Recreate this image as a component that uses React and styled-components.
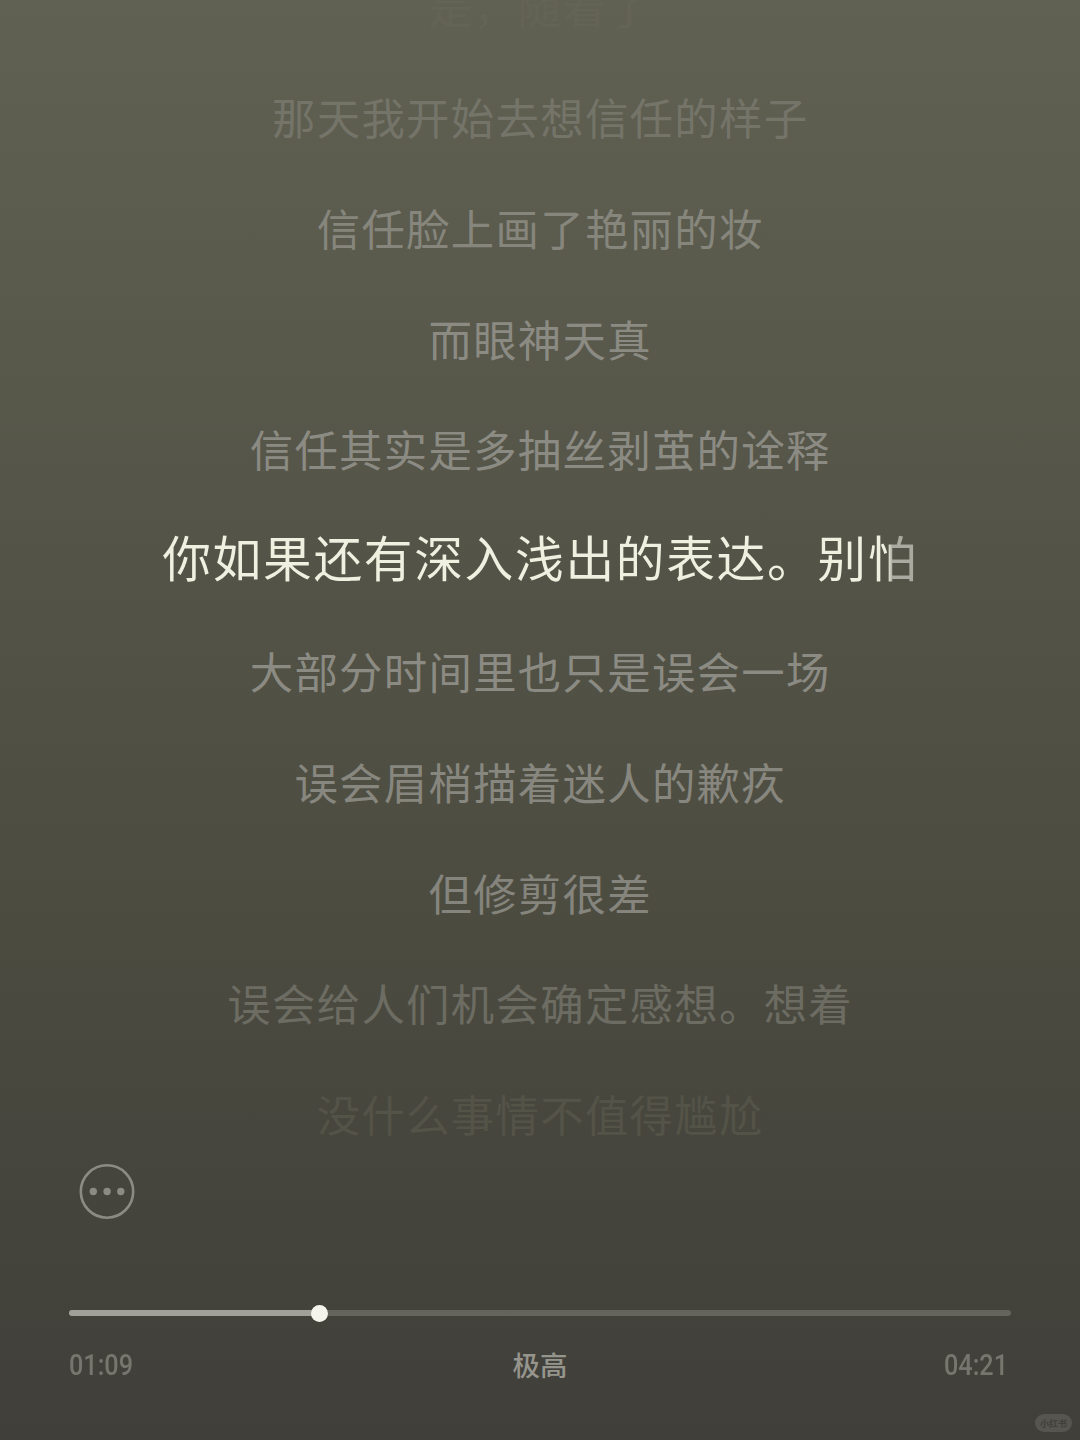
import styled, { createGlobalStyle } from 'styled-components'

const GlobalStyle = createGlobalStyle`
  * {
    box-sizing: border-box;
  }

  body {
    margin: 0;
    background: #42413b;
    font-family: 'Noto Sans CJK SC', sans-serif;
  }
`

const Player = styled.main`
  display: flex;
  flex-direction: column;
  width: 1080px;
  height: 1440px;
  overflow: hidden;
  background: linear-gradient(
    180deg,
    #616153 0%,
    #5c5c4f 12%,
    #535347 40%,
    #4b4b40 65%,
    #45453d 82%,
    #403f3a 100%
  );
`

const Lyrics = styled.section`
  display: flex;
  flex-direction: column;
  justify-content: flex-end;
  height: 1170px;
  padding-bottom: 1.4px;
  flex-shrink: 0;
  overflow: hidden;
`

const Line = styled.p`
  display: flex;
  align-items: center;
  justify-content: center;
  flex-shrink: 0;
  height: 110.8px;
  margin: 0;
  padding-left: 0.4px;
  font-size: 43.4px;
  letter-spacing: 1.3px;
  white-space: nowrap;
  color: ${(props) => props.$color || '#8b8b83'};
`

const ActiveLine = styled(Line)`
  padding-bottom: 7px;
  font-size: 48.8px;
  letter-spacing: 1.6px;
`

const Sung = styled.span`
  color: transparent;
  background: linear-gradient(90deg, #f0f0e1 96%, #aaaaa0 96.6%);
  background-clip: text;
`

const Controls = styled.footer`
  display: flex;
  flex-direction: column;
  padding: 0 69px;
`

const MoreButton = styled.button`
  width: 56px;
  height: 56px;
  margin: -7px 0 0 10px;
  padding: 0;
  border: none;
  background: none;
  color: #8b8b83;

  svg {
    display: block;
  }
`

const Track = styled.div`
  display: flex;
  align-items: center;
  height: 6px;
  margin-top: 91px;
  border-radius: 3px;
  background: #64635c;
`

const Played = styled.div`
  height: 6px;
  border-radius: 3px 0 0 3px;
  background: #a09f98;
`

const Thumb = styled.div`
  width: 17px;
  height: 17px;
  margin-left: -8px;
  border-radius: 50%;
  background: #f4f4ed;
`

const Info = styled.div`
  display: flex;
  align-items: center;
  justify-content: space-between;
  height: 40px;
  margin-top: 28px;
`

const Time = styled.span`
  width: 67px;
  padding-top: 1px;
  font-family: Roboto, sans-serif;
  font-size: 29px;
  font-weight: 500;
  color: #77766e;
  transform: scaleX(0.87);
  transform-origin: left center;
`

const Quality = styled.span`
  font-size: 27.5px;
  font-weight: 500;
  color: #96958d;
`

const Watermark = styled.div`
  display: flex;
  align-items: center;
  justify-content: center;
  align-self: flex-end;
  width: 37px;
  height: 18px;
  margin: 30px 8px 0 0;
  border-radius: 9px;
  font-size: 9px;
  font-weight: 700;
  color: #403f3a;
  background: #565550;
`

const before = [
  { text: '是，随着了', color: '#636356' },
  { text: '那天我开始去想信任的样子', color: '#747469' },
  { text: '信任脸上画了艳丽的妆', color: '#86867d' },
  { text: '而眼神天真' },
  { text: '信任其实是多抽丝剥茧的诠释' }
]

const after = [
  { text: '大部分时间里也只是误会一场' },
  { text: '误会眉梢描着迷人的歉疚', color: '#88877f' },
  { text: '但修剪很差', color: '#85847d' },
  { text: '误会给人们机会确定感想。想着', color: '#6c6c63' },
  { text: '没什么事情不值得尴尬', color: '#545348' }
]

const renderLine = ({ text, color }) => (
  <Line key={text} $color={color}>
    {text}
  </Line>
)

const App = () => {
  const elapsed = 69.2
  const duration = 261

  return (
    <>
      <GlobalStyle />
      <Player>
        <Lyrics>
          {before.map(renderLine)}
          <ActiveLine>
            <Sung>你如果还有深入浅出的表达。别怕</Sung>
          </ActiveLine>
          {after.map(renderLine)}
        </Lyrics>
        <Controls>
          <MoreButton>
            <svg width="56" height="56" viewBox="0 0 56 56" fill="currentColor">
              <circle cx="28" cy="28.5" r="26.2" fill="none" stroke="currentColor" strokeWidth="2.6" />
              <circle cx="14.3" cy="28.5" r="3.7" />
              <circle cx="28.1" cy="28.5" r="3.7" />
              <circle cx="41.8" cy="28.5" r="3.7" />
            </svg>
          </MoreButton>
          <Track>
            <Played style={{ width: `${((elapsed / duration) * 100).toFixed(2)}%` }} />
            <Thumb />
          </Track>
          <Info>
            <Time>01:09</Time>
            <Quality>极高</Quality>
            <Time>04:21</Time>
          </Info>
        </Controls>
        <Watermark>小红书</Watermark>
      </Player>
    </>
  )
}

export default App
